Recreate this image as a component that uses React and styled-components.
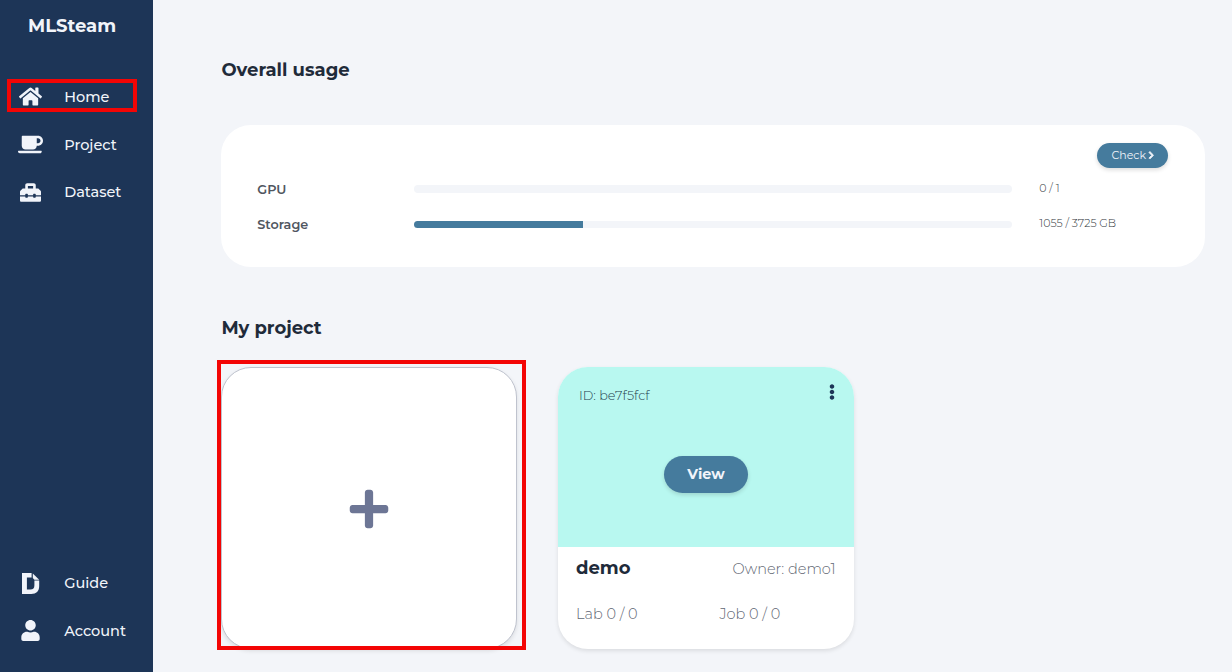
import React from "react";
import styled, { createGlobalStyle } from "styled-components";
import { FaHome, FaCoffee, FaToolbox, FaUser, FaPlus, FaEllipsisV, FaChevronRight } from "react-icons/fa";

const GlobalStyle = createGlobalStyle`
  * { box-sizing: border-box; }
  body {
    margin: 0;
    overflow: hidden;
    background: #f3f5f9;
    font-family: Montserrat, Inter, "Liberation Sans", sans-serif;
  }
  button { font-family: inherit; border: 0; padding: 0; }
`;

const Shell = styled.div`
  display: flex;
  width: 1232px;
  height: 672px;
  background: #f3f5f9;
`;

const Sidebar = styled.aside`
  display: flex;
  flex-direction: column;
  flex: 0 0 153px;
  background: #1d3557;
  color: #f1f4fa;
`;

const Brand = styled.h1`
  margin: 14px 0 47px 28px;
  font-size: 18px;
  line-height: 24px;
  font-weight: 700;
  white-space: nowrap;
`;

const Nav = styled.nav`
  display: flex;
  flex-direction: column;
  gap: 23.5px;
  margin-top: ${(p) => (p.$bottom ? "auto" : "0")};
  padding-bottom: ${(p) => (p.$bottom ? "29.5px" : "0")};
`;

const NavItem = styled.a`
  position: relative;
  display: flex;
  align-items: center;
  height: 24px;
  font-size: 14.5px;
  font-weight: 500;
  white-space: nowrap;
`;

const NavIcon = styled.span`
  display: flex;
  justify-content: center;
  width: 61px;
  margin-right: 3.2px;
  padding-bottom: ${(p) => p.$lift || 0}px;
`;

const Highlight = styled.span`
  position: absolute;
  border: 4px solid #f30505;
  inset: ${(p) => p.$inset};
  pointer-events: none;
`;

const Main = styled.main`
  flex: 1;
  padding: 57px 27px 0 68px;
`;

const Heading = styled.h2`
  margin: 0 0 0 0.4px;
  font-size: 18px;
  line-height: 26px;
  font-weight: 700;
  color: #1f2b3a;
`;

const UsageCard = styled.section`
  height: 142px;
  margin: 42px 0 48px;
  padding: 18px 37px 0 36px;
  border-radius: 30px;
  background: #fff;
`;

const CheckButton = styled.button`
  display: flex;
  align-items: center;
  justify-content: center;
  gap: 1px;
  width: 71px;
  height: 25px;
  margin-left: auto;
  padding: 0 0 1px 2px;
  border-radius: 13px;
  background: #457b9d;
  color: #f1f4fa;
  font-size: 11px;
  font-weight: 400;
  box-shadow: 0 2px 4px rgba(0, 0, 0, 0.14);

  svg {
    stroke: currentColor;
    stroke-width: 50px;
  }
`;

const UsageRow = styled.div`
  display: grid;
  grid-template-columns: 157px 598px 1fr;
  align-items: center;
  height: ${(p) => p.$height}px;
  margin-top: ${(p) => p.$top}px;
`;

const UsageLabel = styled.span`
  padding-left: 0.3px;
  font-size: 12.8px;
  font-weight: 600;
  color: #50565f;
`;

const Track = styled.div`
  height: ${(p) => p.$height}px;
  border-radius: 4px;
  overflow: hidden;
  background: #f3f5f9;
`;

const Fill = styled.div`
  height: 100%;
  background: #457b9d;
`;

const UsageValue = styled.span`
  padding: 0 0 3px 27.3px;
  font-size: 11px;
  font-weight: 300;
  color: #30353c;
  white-space: nowrap;
`;

const Projects = styled.section`
  display: flex;
  gap: 41px;
  margin-top: 26px;
`;

const Card = styled.article`
  width: 296px;
  height: 282px;
  border-radius: 30px;
  background: #fff;
  box-shadow: 0 2px 4px rgba(0, 0, 0, 0.1);
`;

const AddCard = styled(Card)`
  position: relative;
  display: flex;
  align-items: center;
  justify-content: center;
  padding-top: 2px;
  border: 1px solid #bfc3ce;
  color: #6d7695;
`;

const ProjectCard = styled(Card)`
  overflow: hidden;
`;

const Cover = styled.div`
  display: flex;
  flex-direction: column;
  align-items: center;
  height: 180px;
  background: #b8f8f0;
`;

const CoverTop = styled.div`
  display: flex;
  justify-content: space-between;
  align-self: stretch;
  height: 89px;
  padding: 17px 14px 0 21px;
  color: #1d3557;
`;

const ProjectId = styled.span`
  padding-top: 2px;
  font-size: 12.8px;
  line-height: 20px;
  font-weight: 300;
  color: #24404f;
`;

const ViewButton = styled.button`
  width: 84px;
  height: 37px;
  padding-bottom: 2px;
  border-radius: 19px;
  background: #457b9d;
  color: #f1f4fa;
  font-size: 14.4px;
  font-weight: 700;
  box-shadow: 0 2px 4px rgba(0, 0, 0, 0.14);
`;

const Details = styled.div`
  padding: 9px 18.5px 0 18px;
`;

const TitleRow = styled.div`
  display: flex;
  justify-content: space-between;
  height: 26px;
`;

const ProjectName = styled.h3`
  margin: 0;
  font-size: 18px;
  font-weight: 700;
  line-height: 24px;
  color: #1f2b3a;
`;

const Meta = styled.span`
  font-size: 14.5px;
  line-height: 26px;
  font-weight: 300;
  color: #5f6774;
  white-space: nowrap;
`;

const Counts = styled.div`
  display: grid;
  grid-template-columns: 143.4px 1fr;
  margin-top: 19px;
`;

const GuideIcon = () => (
  <svg width="18" height="21" viewBox="0 0 18 21" fill="currentColor">
    <path d="M0 0H9.6V4.6H4.9V16.6H8.4C11.2 16.6 12.4 15.2 12.4 12.3V7.4H17.2V13C17.2 18.2 14.3 21 9.2 21H0Z" />
    <path d="M10.8 0.4L17.2 6.7H12.4L10.8 5.1Z" />
  </svg>
);

export default function App() {
  return (
    <Shell>
      <GlobalStyle />
      <Sidebar>
        <Brand>MLSteam</Brand>
        <Nav>
          <NavItem>
            <NavIcon $lift={1}><FaHome size={23} /></NavIcon>
            Home
            <Highlight $inset="-6px 16px -3px 7px" />
          </NavItem>
          <NavItem>
            <NavIcon><FaCoffee size={25} /></NavIcon>
            Project
          </NavItem>
          <NavItem>
            <NavIcon><FaToolbox size={21} /></NavIcon>
            Dataset
          </NavItem>
        </Nav>
        <Nav $bottom>
          <NavItem>
            <NavIcon><GuideIcon /></NavIcon>
            Guide
          </NavItem>
          <NavItem>
            <NavIcon><FaUser size={21} /></NavIcon>
            Account
          </NavItem>
        </Nav>
      </Sidebar>
      <Main>
        <Heading>Overall usage</Heading>
        <UsageCard>
          <CheckButton>Check <FaChevronRight size={8.5} /></CheckButton>
          <UsageRow $height={20} $top={11}>
            <UsageLabel>GPU</UsageLabel>
            <Track $height={8} />
            <UsageValue>0 / 1</UsageValue>
          </UsageRow>
          <UsageRow $height={21} $top={15}>
            <UsageLabel>Storage</UsageLabel>
            <Track $height={7}><Fill style={{ width: `${(1055 / 3725) * 100}%` }} /></Track>
            <UsageValue>1055 / 3725 GB</UsageValue>
          </UsageRow>
        </UsageCard>
        <Heading>My project</Heading>
        <Projects>
          <AddCard>
            <FaPlus size={44} />
            <Highlight $inset="-8px -10px -2px -5px" />
          </AddCard>
          <ProjectCard>
            <Cover>
              <CoverTop>
                <ProjectId>ID: be7f5fcf</ProjectId>
                <FaEllipsisV size={16} />
              </CoverTop>
              <ViewButton>View</ViewButton>
            </Cover>
            <Details>
              <TitleRow>
                <ProjectName>demo</ProjectName>
                <Meta>Owner: demo1</Meta>
              </TitleRow>
              <Counts>
                <Meta>Lab 0 / 0</Meta>
                <Meta>Job 0 / 0</Meta>
              </Counts>
            </Details>
          </ProjectCard>
        </Projects>
      </Main>
    </Shell>
  );
}
